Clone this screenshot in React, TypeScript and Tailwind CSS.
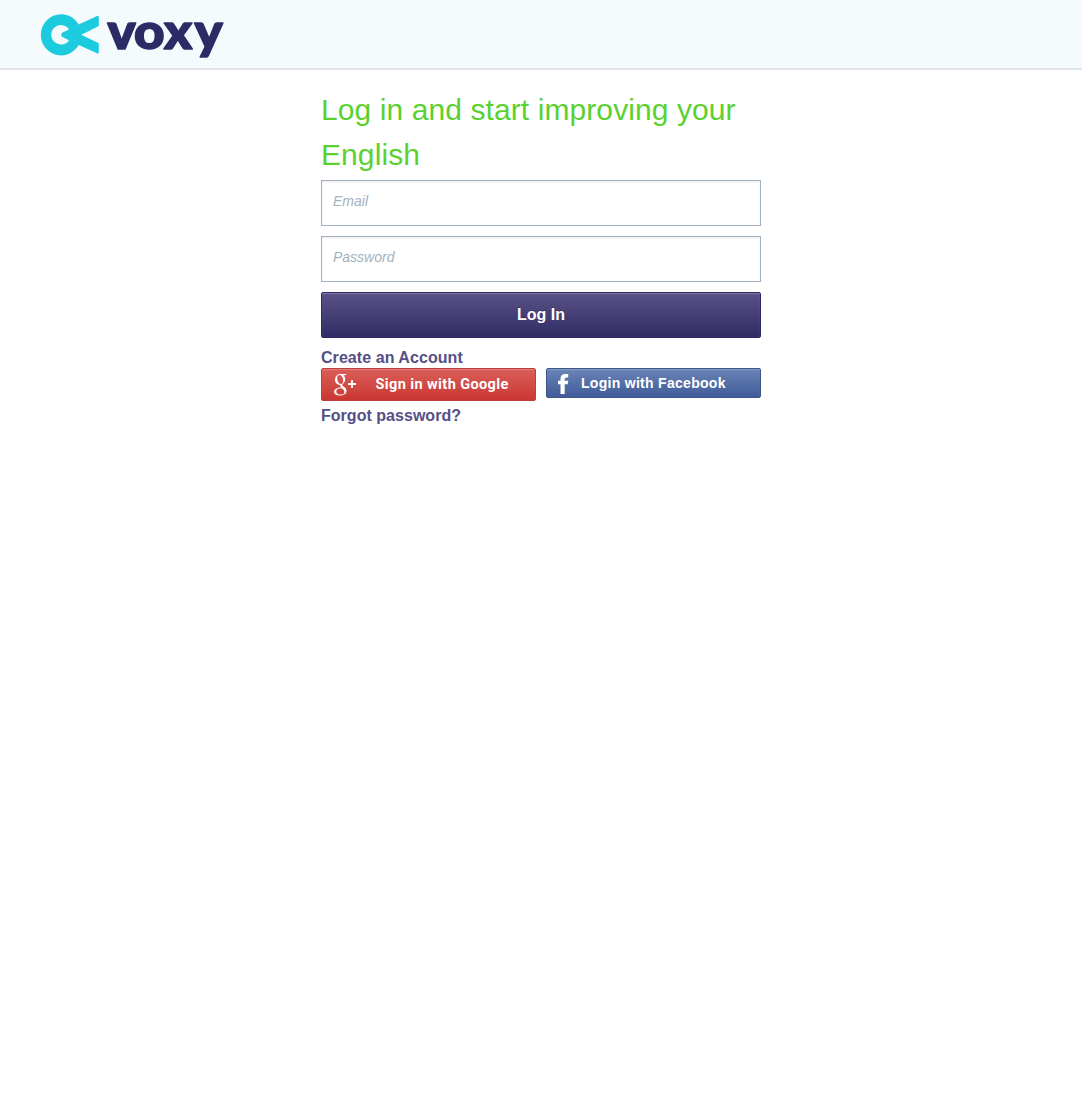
import React from "react";

function Logo() {
  return (
    <svg width="190" height="58" viewBox="38 10 190 58" role="img" aria-label="voxy" className="block overflow-visible">
      <path
        fill="#1dcbdf"
        fillRule="evenodd"
        d="M61 14.2C68.5 14.2 75 18.2 78.7 24.6L97 16.1Q98.8 15.4 98.8 17.2V26L81.3 34.8L98.8 43.3V52.2Q98.8 54 97 53.3L78.7 45C75 51.4 68.5 55.4 61 55.4A20.2 20.6 0 0 1 61 14.2ZM69 29.4A9.7 9.7 0 1 0 69 40.2L62 36.8Q60.4 34.8 62 32.8Z"
      />
      <text
        y="48.6"
        x="99.6 124.2 151.8 180.2"
        transform="scale(1.08 1)"
        fill="#2e2a66"
        stroke="#2e2a66"
        strokeWidth="1.6"
        strokeLinejoin="round"
        fontFamily="Lato, sans-serif"
        fontWeight="900"
        fontSize="49"
      >
        voxy
      </text>
    </svg>
  );
}

function Field({ type, label }: { type: string; label: string }) {
  return (
    <input
      type={type}
      placeholder={label}
      aria-label={label}
      className="mb-2.5 block h-[46px] w-full border border-[#a3b1be] bg-white px-[11px] pb-[5px] text-sm italic shadow-[inset_0_1px_2px_rgba(0,0,0,0.08)] outline-none placeholder:text-[#a3b1be] placeholder:opacity-100"
    />
  );
}

export default function App() {
  return (
    <div className="min-h-screen bg-white font-['Liberation_Sans',Arial,sans-serif]">
      <header className="h-[70px] border-b-2 border-[#e0e6e9] bg-[#f5fafd] pt-2.5 pl-[38px]">
        <Logo />
      </header>
      <main className="mx-auto w-[440px] pt-[17px]">
        <h1 className="mb-[3px] text-[30px] leading-[45px] tracking-[0.09px] text-[#5bd12f]">Log in and start improving your English</h1>
        <form onSubmit={(e) => e.preventDefault()}>
          <Field type="email" label="Email" />
          <Field type="password" label="Password" />
          <button className="block h-[46px] w-full rounded-xs border border-[#2e2a60] bg-linear-to-b from-[#595287] to-[#322c65] text-base font-bold text-white shadow-[inset_0_1px_1px_rgba(255,255,255,0.25)] [text-shadow:0_-1px_0_rgba(0,0,0,0.25)]">
            Log In
          </button>
        </form>
        <a href="#" className="mt-[9px] block h-[21px] text-base leading-[22px] font-bold tracking-[0.06px] text-[#564f86]">
          Create an Account
        </a>
        <div className="flex items-start gap-2.5">
          <button className="flex h-[33px] w-[215px] items-center rounded-xs border border-[#bb3f3b] bg-linear-to-b from-[#da5d58] to-[#cb3632] pl-[11px] text-left text-white shadow-[inset_0_1px_1px_rgba(255,255,255,0.2)]">
            <svg width="25" height="24" viewBox="0 0 25 24" fill="currentColor" className="shrink-0">
              <path
                fillRule="evenodd"
                d="M7.4 1H13.6L12.2 2.2H10.2C11.6 3.2 12.3 4.6 12.3 6.3C12.3 8.3 11.3 9.5 10.1 10.5C9 11.4 8.9 12.2 9.9 13L11.3 14.1C12.7 15.2 13.5 16.3 13.5 18C13.5 20.7 10.9 22.6 6.7 22.6C3.1 22.6 1 21.2 1 18.8C1 16.2 4 14.5 8 14.4C7.4 13.7 7.1 13 7.4 12C4.2 12.1 2 9.8 2 6.8C2 3.6 4.3 1 7.4 1ZM6.6 2C4.9 2 4.2 3.3 4.2 5.1C4.2 8 5.7 11 7.9 11C9.6 11 10.2 9.6 10.2 8C10.2 5.1 8.8 2 6.6 2ZM8.6 15.3C5.2 15.3 3.3 16.5 3.3 18.4C3.3 20.4 4.9 21.5 7.6 21.5C10.1 21.5 11.4 20.6 11.4 18.9C11.4 17.5 10.4 16.6 8.6 15.3Z"
              />
              <path d="M18.1 7H19.9V10.1H23V11.9H19.9V15H18.1V11.9H15V10.1H18.1Z" />
            </svg>
            <span className="mt-px ml-[17.5px] font-[Roboto,sans-serif] text-[14.5px] font-bold tracking-[0.4px]">Sign in with Google</span>
          </button>
          <button className="flex h-[30px] w-[215px] items-center rounded-xs border border-[#3c5488] bg-linear-to-b from-[#6b84b7] to-[#405b98] pl-[11px] text-left text-white shadow-[inset_0_1px_1px_rgba(255,255,255,0.2)]">
            <svg width="11" height="20" viewBox="0 0 11 20" fill="currentColor" className="mt-[2px] shrink-0">
              <path d="M10.2 0V3.4H8.3Q6.7 3.4 6.7 5V6.8H10.2L9.8 10.2H6.7V20H2.5V10.2H0V6.8H2.5V4.8Q2.5 0 7.2 0Z" />
            </svg>
            <span className="ml-[12px] text-sm font-bold tracking-[0.29px]">Login with Facebook</span>
          </button>
        </div>
        <a href="#" className="mt-[4px] block text-base leading-[22px] font-bold tracking-[0.03px] text-[#564f86]">
          Forgot password?
        </a>
      </main>
    </div>
  );
}
